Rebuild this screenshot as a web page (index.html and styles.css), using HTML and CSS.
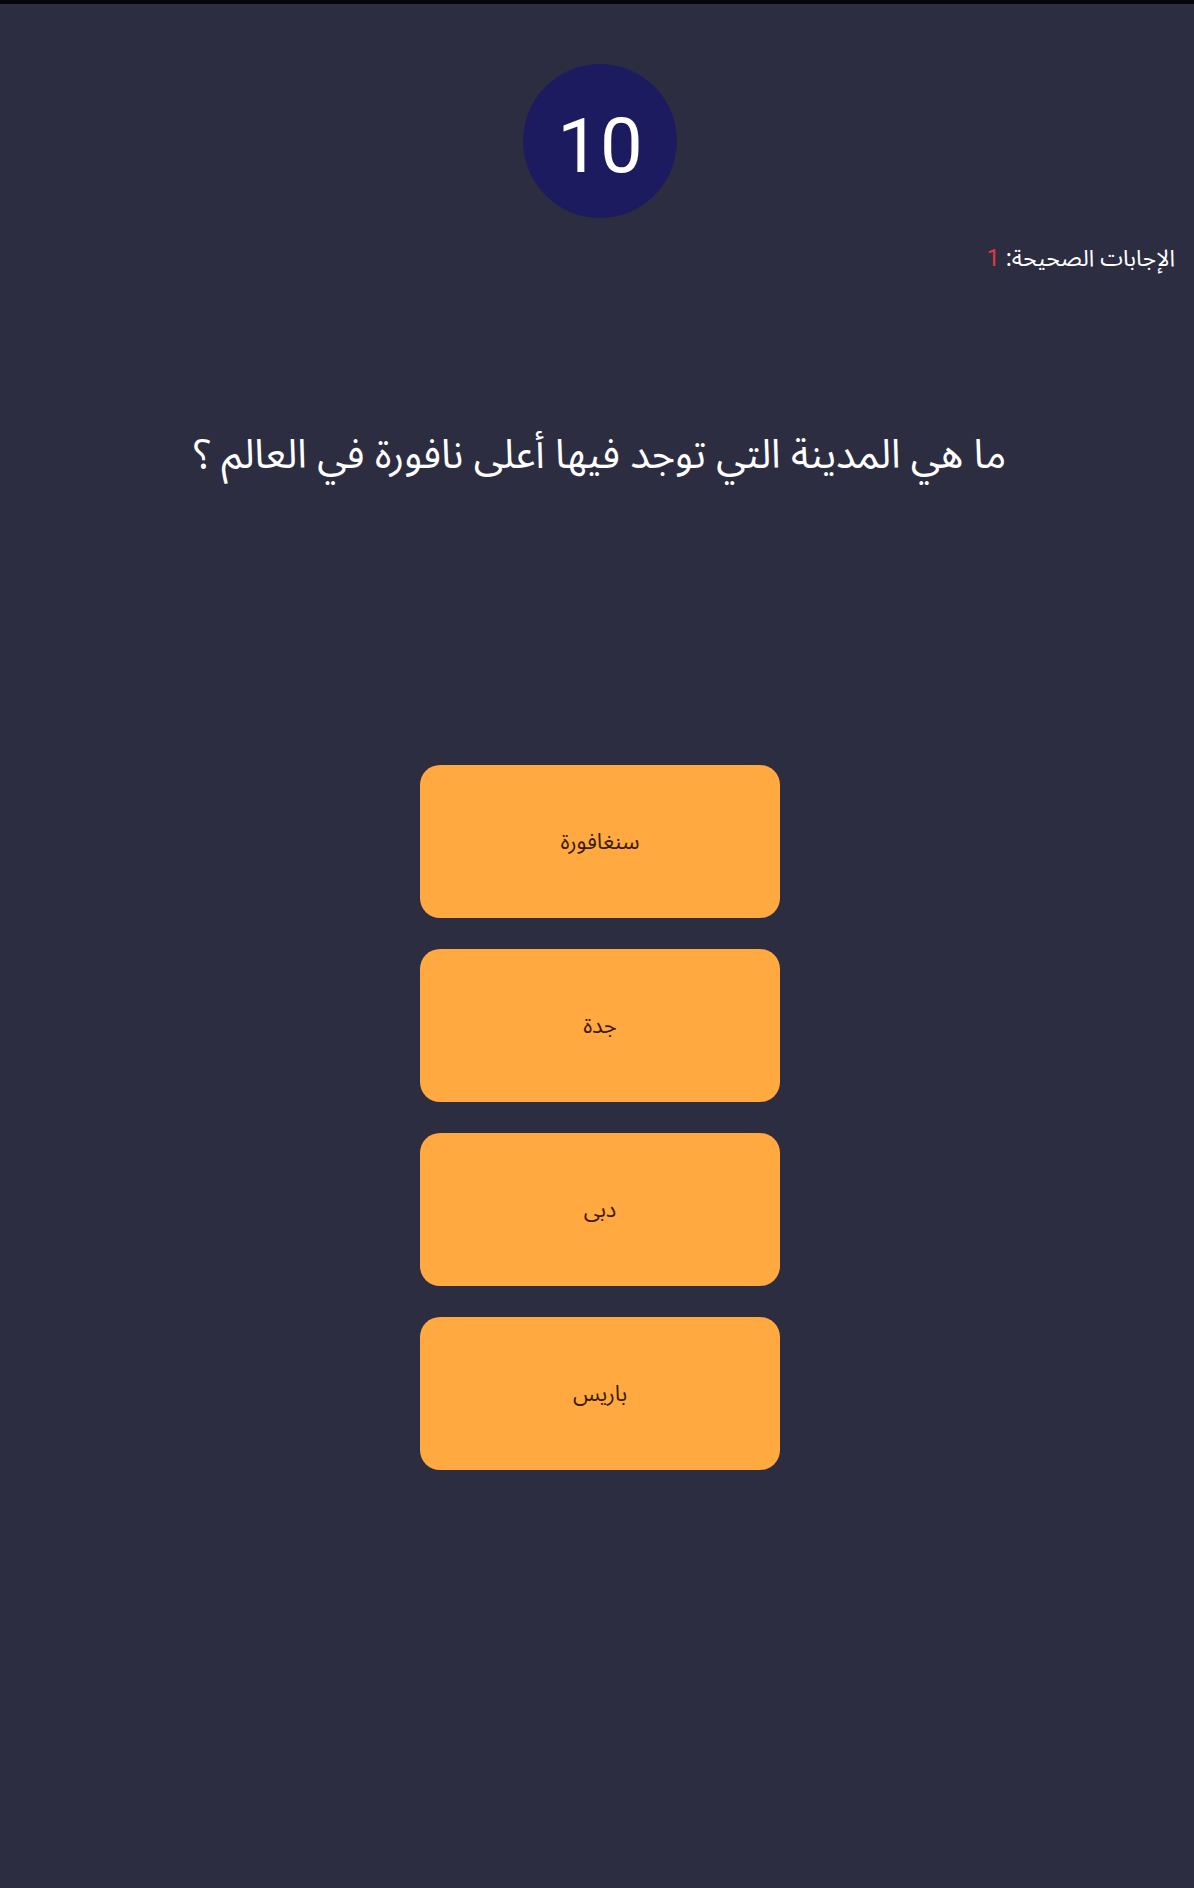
FILE: index.html
```html
<!DOCTYPE html>
<html lang="ar" dir="rtl">
<head>
<meta charset="utf-8">
<link rel="stylesheet" href="styles.css">
</head>
<body>
<div class="topbar"></div>
<main class="quiz">
  <div class="timer"><span class="timer-num">10</span></div>
  <div class="score">الإجابات الصحيحة: <span class="score-num">1</span></div>
  <h1 class="question">ما هي المدينة التي توجد فيها أعلى نافورة في العالم ؟</h1>
  <div class="answers">
    <button class="answer">سنغافورة</button>
    <button class="answer">جدة</button>
    <button class="answer">دبى</button>
    <button class="answer">باريس</button>
  </div>
</main>
</body>
</html>
```
FILE: styles.css
```css
html, body {
  margin: 0;
  padding: 0;
}
body {
  background: #2d2d42;
  min-height: 100vh;
  font-family: "Noto Sans Arabic", "Noto Naskh Arabic", "DejaVu Sans", sans-serif;
  color: #ffffff;
}
.topbar {
  height: 4px;
  background: #06060a;
}
.quiz {
  display: flex;
  flex-direction: column;
  align-items: center;
  padding-left: 6px;
}
.timer {
  margin-top: 60px;
  width: 154px;
  height: 154px;
  border-radius: 50%;
  background: #1d1b5f;
  display: flex;
  align-items: center;
  justify-content: center;
}
.timer-num {
  font-family: Roboto, "Liberation Sans", sans-serif;
  font-size: 76px;
  color: #ffffff;
  line-height: 1;
  padding-top: 9px;
}
.score {
  align-self: stretch;
  margin-top: 27px;
  padding-right: 19px;
  font-size: 23px;
  line-height: 28px;
  text-align: right;
  direction: rtl;
}
.score-num {
  color: #e03a3a;
  font-family: Roboto, "Liberation Sans", sans-serif;
}
.question {
  margin: 158px 0 0;
  font-size: 40px;
  font-weight: normal;
  line-height: 50px;
  text-align: center;
}
.answers {
  margin-top: 284px;
  display: flex;
  flex-direction: column;
  gap: 31px;
}
.answer {
  width: 360px;
  height: 153px;
  border: none;
  border-radius: 20px;
  background: #ffa940;
  color: #3b1a08;
  font-family: "Noto Sans Arabic", "Noto Naskh Arabic", "DejaVu Sans", sans-serif;
  font-size: 22px;
  padding: 0;
}
```
